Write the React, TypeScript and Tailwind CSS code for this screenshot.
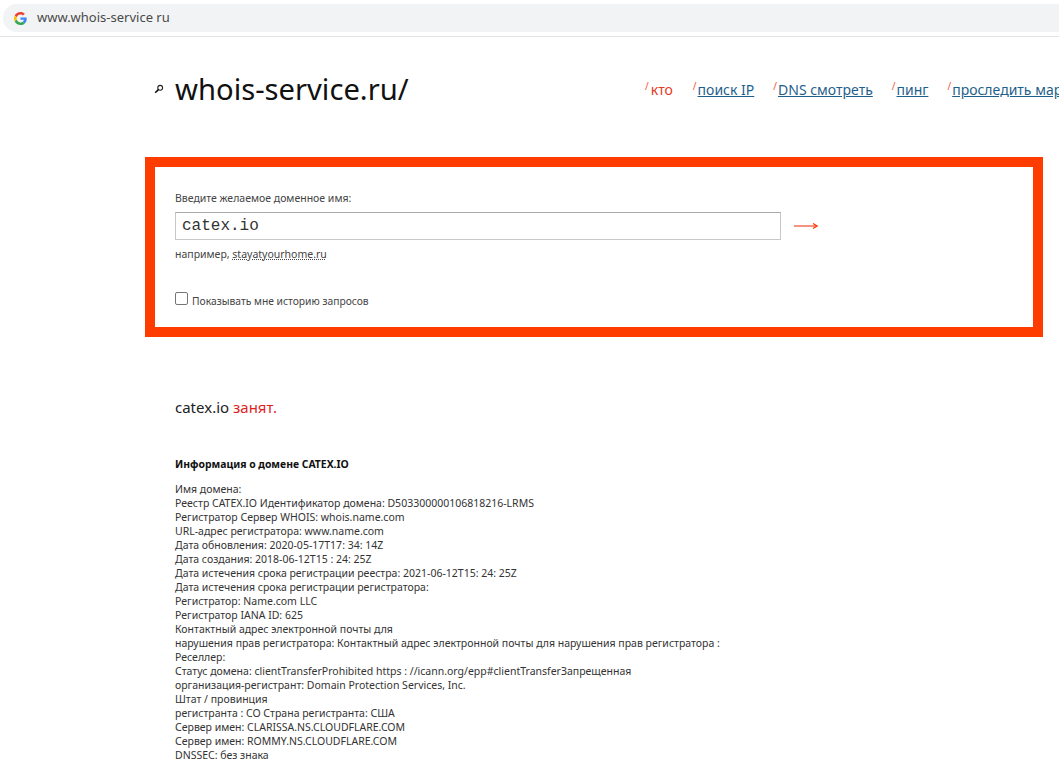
const whoisLines = [
  "Имя домена:",
  "Реестр CATEX.IO Идентификатор домена: D503300000106818216-LRMS",
  "Регистратор Сервер WHOIS: whois.name.com",
  "URL-адрес регистратора: www.name.com",
  "Дата обновления: 2020-05-17T17: 34: 14Z",
  "Дата создания: 2018-06-12T15 : 24: 25Z",
  "Дата истечения срока регистрации реестра: 2021-06-12T15: 24: 25Z",
  "Дата истечения срока регистрации регистратора:",
  "Регистратор: Name.com LLC",
  "Регистратор IANA ID: 625",
  "Контактный адрес электронной почты для",
  "нарушения прав регистратора: Контактный адрес электронной почты для нарушения прав регистратора :",
  "Реселлер:",
  "Статус домена: clientTransferProhibited https : //icann.org/epp#clientTransferЗапрещенная",
  "организация-регистрант: Domain Protection Services, Inc.",
  "Штат / провинция",
  "регистранта : CO Страна регистранта: США",
  "Сервер имен: CLARISSA.NS.CLOUDFLARE.COM",
  "Сервер имен: ROMMY.NS.CLOUDFLARE.COM",
  "DNSSEC: без знака",
];

const navLinks = [
  { label: "поиск IP", gap: "ml-[20px]" },
  { label: "DNS смотреть", gap: "ml-[19px]" },
  { label: "пинг", gap: "ml-[19px]" },
  { label: "проследить маршрут", gap: "ml-[19px]" },
];

function GoogleLogo() {
  return (
    <svg viewBox="0 0 48 48" className="h-[13px] w-[13px] shrink-0">
      <path fill="#EA4335" d="M24 9.5c3.5 0 6.700 1.200 9.200 3.600l6.900-6.900C35.900 2.400 30.500 0 24 0 14.600 0 6.500 5.400 2.600 13.200l8 6.200C12.500 13.700 17.800 9.500 24 9.500z" />
      <path fill="#4285F4" d="M46.900 24.500c0-1.600-.1-3.100-.4-4.500H24v9h12.900c-.6 3-2.200 5.500-4.700 7.200l7.700 6c4.500-4.200 7-10.300 7-17.700z" />
      <path fill="#FBBC05" d="M10.500 28.600c-.5-1.400-.8-3-.8-4.600s.3-3.200.8-4.600l-8-6.200C.9 16.500 0 20.100 0 24s.9 7.500 2.600 10.800l7.900-6.200z" />
      <path fill="#34A853" d="M24 48c6.500 0 11.900-2.100 15.900-5.800l-7.700-6c-2.100 1.400-4.900 2.300-8.200 2.300-6.200 0-11.500-4.200-13.400-9.900l-8 6.200C6.500 42.600 14.600 48 24 48z" />
    </svg>
  );
}

function App() {
  return (
    <div className="h-[769px] w-full overflow-hidden bg-white font-['Noto_Sans',sans-serif] text-[#222]">
      <div className="h-[37px] border-b border-[#e4e4e4] pt-[4px]">
        <div className="ml-[3px] flex h-[28px] items-center gap-[10px] rounded-l-[14px] bg-[#f1f3f4] pl-[11px] text-[13px] text-[#4a4a4a]">
          <GoogleLogo />
          <span>www.whois-service ru</span>
        </div>
      </div>

      <div className="pl-[145px]">
        <div className="flex h-[120px] items-start whitespace-nowrap">
          <svg viewBox="0 0 10 10" className="ml-[9px] mt-[47px] h-[10px] w-[10px] shrink-0">
            <circle cx="6.200" cy="3.800" r="2.400" fill="none" stroke="#222" strokeWidth="1.100" />
            <path d="M4.400 5.600 1.200 8.800" stroke="#111" strokeWidth="1.600" />
          </svg>
          <h1 className="ml-[11px] mt-[32px] w-[229px] text-[29.200px] leading-[40px] font-normal text-[#111]">whois-service.ru/</h1>
          <nav className="ml-[241px] mt-[43px] flex text-[14px] leading-[20px]">
            <span className="text-[#e53a24]"><sup className="mr-[2px] text-[10px] text-[#f0563a]">/</sup>кто</span>
            {navLinks.map((link) => (
              <span key={link.label} className={link.gap}>
                <sup className="mr-[1px] text-[10px] text-[#f0563a]">/</sup>
                <a href="#" className="text-[#1f5f8b] underline">{link.label}</a>
              </span>
            ))}
          </nav>
        </div>

        <form className="h-[180px] w-[898px] border-[10px] border-[#ff3c00] pl-[20px] pt-[24px] text-[10.500px] leading-[14px] text-[#444]">
          <div>Введите желаемое доменное имя:</div>
          <div className="mt-[7px] flex items-center">
            <input
              readOnly
              value="catex.io"
              className="h-[28px] w-[606px] border border-[#c8c8c8] border-t-[#a9a9a9] px-[6px] font-['Liberation_Mono',monospace] text-[16px] text-[#333] outline-none"
            />
            <svg viewBox="0 0 24 10" className="ml-[13px] h-[10px] w-[24px]">
              <path d="M0 5h22" stroke="#f0573c" strokeWidth="1.300" />
              <path d="M19 2.500 23 5l-4 2.500" fill="none" stroke="#ff3c00" strokeWidth="1.300" />
            </svg>
          </div>
          <div className="mt-[7px]">
            например, <a href="#" className="underline decoration-dotted">stayatyourhome.ru</a>
          </div>
          <label className="mt-[31px] flex items-center gap-[4px] text-[10.300px]">
            <span className="mb-[4px] h-[13px] w-[13px] rounded-[2px] border border-[#767676] bg-white" />
            <span>Показывать мне историю запросов</span>
          </label>
        </form>

        <div className="pl-[30px]">
          <p className="mt-[59px] text-[15px] leading-[22px] text-[#222]">
            catex.io <span className="text-[#e01f1f]">занят.</span>
          </p>
          <h2 className="mt-[39px] text-[10.400px] leading-[14px] font-bold text-[#111]">Информация о домене CATEX.IO</h2>
          <div className="mt-[11px] whitespace-nowrap text-[10.500px] leading-[14px] text-[#333]">
            {whoisLines.map((line) => (
              <div key={line}>{line}</div>
            ))}
          </div>
        </div>
      </div>
    </div>
  );
}

export default App;
